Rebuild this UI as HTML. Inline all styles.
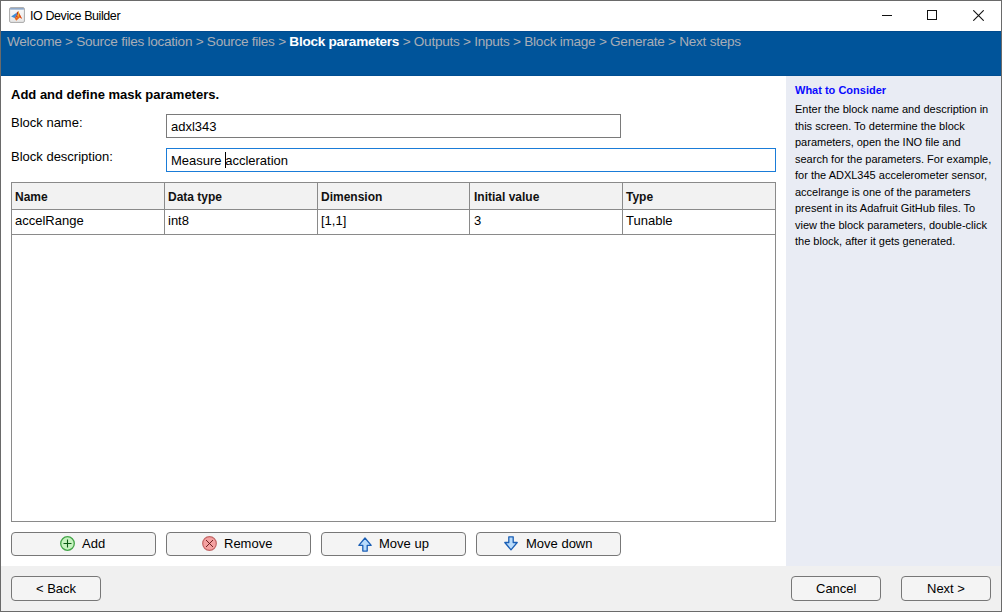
<!DOCTYPE html>
<html><head><meta charset="utf-8">
<style>
*{margin:0;padding:0;box-sizing:border-box}
html,body{width:1002px;height:612px;overflow:hidden;background:#fff}
body{position:relative;font-family:"Liberation Sans",sans-serif;color:#000}
.abs{position:absolute}
#win{position:absolute;left:0;top:0;width:1002px;height:612px;border:1px solid #6a6a6a}
#title{position:absolute;left:30px;top:8px;font-size:12.5px;letter-spacing:-0.42px;line-height:16px;white-space:nowrap;color:#000}
#banner{position:absolute;left:1px;top:31px;width:1000px;height:45px;background:#00549a;border-top:1px solid #004a8e;border-bottom:1px solid #004e92}
#crumb{position:absolute;left:7px;top:34px;font-size:13.6px;letter-spacing:-0.27px;line-height:16px;white-space:nowrap;color:#a8adb6}
#crumb b{color:#fff}
#help{position:absolute;left:786px;top:76px;width:215px;height:490px;background:#e9ecf4}
#help h4{position:absolute;left:9px;top:7px;font-size:11px;font-weight:bold;color:#0a0aff;white-space:nowrap;line-height:14px}
#help p{position:absolute;left:9px;top:25px;white-space:nowrap;font-size:11px;line-height:16.5px;color:#000}
#footer{position:absolute;left:1px;top:566px;width:1000px;height:45px;background:#f0f0f0}
.lbl{position:absolute;font-size:13px;line-height:16px;white-space:nowrap}
.inp{position:absolute;border:1px solid #7a7a7a;background:#fff;height:24px}
.inp span{position:absolute;left:4px;top:4px;font-size:13px;line-height:16px;white-space:nowrap}
#tbl{position:absolute;left:11px;top:182px;width:765px;height:340px;border:1px solid #8a8a8a;background:#fff}
.hdr{position:absolute;left:0;top:0;width:763px;height:27px;background:#f2f2f2;border-bottom:1px solid #8a8a8a}
.row{position:absolute;left:0;top:27px;width:763px;height:25px;border-bottom:1px solid #8a8a8a}
.vl{position:absolute;top:0;width:1px;height:51px;background:#8a8a8a}
.hc{position:absolute;top:7px;font-size:12px;font-weight:bold;line-height:14px;white-space:nowrap;color:#111}
.dc{position:absolute;top:4px;font-size:13px;line-height:16px;white-space:nowrap;color:#000}
.btn{position:absolute;height:24px;border:1px solid #777;border-radius:4px;background:#f4f4f4}
.btn .t{position:absolute;top:3px;font-size:13px;line-height:16px;white-space:nowrap}
</style></head><body>
<div id="win"></div>
<!-- title icon -->
<svg class="abs" style="left:9px;top:7px" width="16" height="16" viewBox="0 0 16 16">
  <defs>
    <linearGradient id="ib" x1="0" y1="0" x2="0" y2="1"><stop offset="0" stop-color="#fbfbfb"/><stop offset="1" stop-color="#e6e6e6"/></linearGradient>
  </defs>
  <rect x="0.6" y="0.6" width="14.8" height="14.8" rx="1.3" fill="url(#ib)" stroke="#a8a8a8" stroke-width="1"/>
  <rect x="1.1" y="1.1" width="13.8" height="1.5" fill="#87a2c6"/>
  <path d="M2.1 9.4 L7.6 5.8 L8 7.5 L5.6 11 Z" fill="#3f8ed6"/>
  <path d="M7.6 5.8 L9.4 4 L9 7 L7.5 10.5 L5.6 11 L8 7.5 Z" fill="#b8321e"/>
  <path d="M9.4 4 L10.5 7 L13 11.7 L10.8 10.5 L7.2 13.7 L5.6 11 L7.5 10.5 L9 7 Z" fill="#ea6a1c"/>
  <path d="M9.4 4 L10 6 L9.8 9.5 L9 10 L9 7 Z" fill="#f4c02c"/>
  <path d="M10 6 L13 11.7 L11.6 11 L10.5 9 Z" fill="#d9441a"/>
</svg>
<div id="title">IO Device Builder</div>
<!-- window controls -->
<div class="abs" style="left:882px;top:15px;width:10px;height:1px;background:#111"></div>
<div class="abs" style="left:927px;top:10px;width:10px;height:10px;border:1px solid #111"></div>
<svg class="abs" style="left:973px;top:10px" width="11" height="11" viewBox="0 0 11 11"><path d="M0.3 0.3 L10.7 10.7 M10.7 0.3 L0.3 10.7" stroke="#111" stroke-width="1.1"/></svg>

<div id="banner"></div>
<div id="crumb">Welcome &gt; Source files location &gt; Source files &gt; <b>Block parameters</b> &gt; Outputs &gt; Inputs &gt; Block image &gt; Generate &gt; Next steps</div>

<div id="help">
  <h4>What to Consider</h4>
  <p>Enter the block name and description in<br>this screen. To determine the block<br>parameters, open the INO file and<br>search for the parameters. For example,<br>for the ADXL345 accelerometer sensor,<br>accelrange is one of the parameters<br>present in its Adafruit GitHub files. To<br>view the block parameters, double-click<br>the block, after it gets generated.</p>
</div>

<div class="lbl" style="left:11px;top:87px;font-weight:bold">Add and define mask parameters.</div>
<div class="lbl" style="left:11px;top:115px">Block name:</div>
<div class="lbl" style="left:11px;top:149px">Block description:</div>
<div class="inp" style="left:166px;top:114px;width:455px"><span>adxl343</span></div>
<div class="inp" style="left:166px;top:148px;width:610px;border-color:#1a7cd8"><span>Measure accleration</span></div>
<div class="abs" style="left:225px;top:152px;width:1px;height:16px;background:#000"></div>

<div id="tbl">
  <div class="hdr"></div>
  <div class="row"></div>
  <div class="vl" style="left:152px"></div>
  <div class="vl" style="left:305px"></div>
  <div class="vl" style="left:457px"></div>
  <div class="vl" style="left:610px"></div>
  <div class="hc" style="left:3px">Name</div>
  <div class="hc" style="left:156px">Data type</div>
  <div class="hc" style="left:309px">Dimension</div>
  <div class="hc" style="left:462px">Initial value</div>
  <div class="hc" style="left:614px">Type</div>
  <div class="dc" style="left:3px;top:30px">accelRange</div>
  <div class="dc" style="left:156px;top:30px">int8</div>
  <div class="dc" style="left:309px;top:30px">[1,1]</div>
  <div class="dc" style="left:462px;top:30px">3</div>
  <div class="dc" style="left:614px;top:30px">Tunable</div>
</div>

<div class="btn" style="left:11px;top:532px;width:145px">
  <svg class="abs" style="left:48px;top:3px" width="15" height="15" viewBox="0 0 15 15"><circle cx="7.5" cy="7.5" r="6.8" fill="#c6f2bf" stroke="#42a447" stroke-width="1.3"/><path d="M3.5 7.5 H11.5 M7.5 3.5 V11.5" stroke="#0b5a14" stroke-width="1.1"/></svg>
  <span class="t" style="left:70px">Add</span>
</div>
<div class="btn" style="left:166px;top:532px;width:145px">
  <svg class="abs" style="left:35px;top:3px" width="15" height="15" viewBox="0 0 15 15"><circle cx="7.5" cy="7.5" r="6.8" fill="#f4a1a1" stroke="#c26464" stroke-width="1.2"/><path d="M4 4 L11 11 M11 4 L4 11" stroke="#5c1414" stroke-width="0.9"/></svg>
  <span class="t" style="left:57px">Remove</span>
</div>
<div class="btn" style="left:321px;top:532px;width:145px">
  <svg class="abs" style="left:36px;top:4px" width="15" height="16" viewBox="0 0 15 16"><path d="M7 1 L13.2 8.3 H9.2 V14.1 H4.8 V8.3 H0.8 Z" fill="#b9dcfc" stroke="#1b5fb5" stroke-width="1.3" stroke-linejoin="round"/></svg>
  <span class="t" style="left:57px">Move up</span>
</div>
<div class="btn" style="left:476px;top:532px;width:145px">
  <svg class="abs" style="left:27px;top:3px" width="15" height="16" viewBox="0 0 15 16"><path d="M7 13.8 L13.2 6.5 H9.2 V0.8 H4.8 V6.5 H0.8 Z" fill="#b9dcfc" stroke="#1b5fb5" stroke-width="1.3" stroke-linejoin="round"/></svg>
  <span class="t" style="left:49px">Move down</span>
</div>

<div id="footer"></div>
<div class="btn" style="left:11px;top:576px;width:90px;height:25px"><span class="t" style="left:24px;top:4px">&lt; Back</span></div>
<div class="btn" style="left:791px;top:576px;width:90px;height:25px"><span class="t" style="left:24px;top:4px">Cancel</span></div>
<div class="btn" style="left:901px;top:576px;width:90px;height:25px"><span class="t" style="left:25px;top:4px">Next &gt;</span></div>
</body></html>
